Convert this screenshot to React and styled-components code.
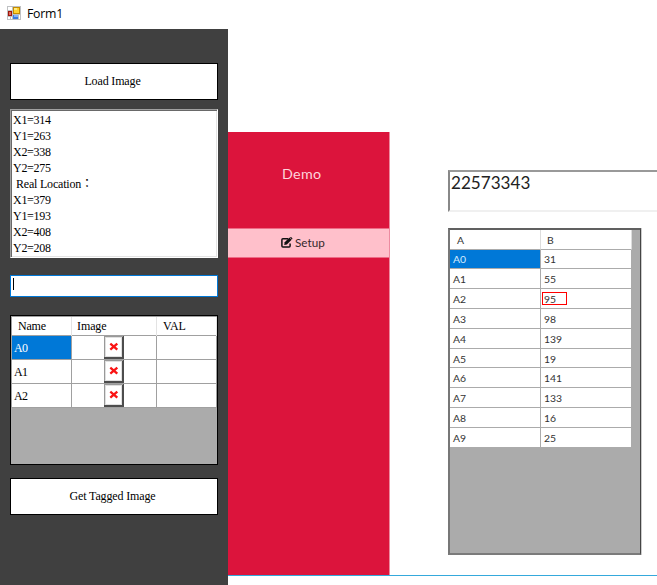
import React from 'react';
import styled, { createGlobalStyle } from 'styled-components';

const GlobalStyle = createGlobalStyle`
  * { box-sizing: border-box; }
  body { margin: 0; background: #fff; overflow: hidden; }
`;

const serif = '"Liberation Serif", "Noto Sans CJK TC", serif';
const geometric = 'Lato, sans-serif';

const Window = styled.div`
  width: 657px;
  height: 585px;
  display: flex;
  flex-direction: column;
  background: #fff;
  color: #000;
  overflow: hidden;
`;

const TitleBar = styled.header`
  height: 29px;
  flex: none;
  display: flex;
  align-items: flex-start;
  gap: 6px;
  padding: 6px 0 0 7px;
  font: 12.3px/16px "Open Sans", sans-serif;
  letter-spacing: -0.25px;
`;

const Body = styled.div`
  flex: 1;
  display: flex;
  min-height: 0;
`;

const Sidebar = styled.aside`
  width: 228px;
  flex: none;
  display: flex;
  flex-direction: column;
  padding: 34px 10px 0;
  background: #404040;
  font: 12px/16px ${serif};
`;

const PushButton = styled.button`
  height: 37px;
  flex: none;
  margin: 0;
  padding: 0 3px 2px 0;
  border: 1px solid #000;
  border-radius: 0;
  background: #fff;
  color: #000;
  font: 12px/16px ${serif};
  letter-spacing: -0.15px;
`;

const ListBox = styled.div`
  height: 149px;
  flex: none;
  margin: 9px 0 17px;
  padding: 1px 0 0 1px;
  border: 1px solid;
  border-color: #a0a0a0 #fff #fff #a0a0a0;
  box-shadow: inset 1px 1px #696969, inset -1px -1px #e3e3e3;
  background: #fff;
`;

const ListItem = styled.div`
  height: 16px;
  line-height: 18px;
  padding-left: ${(p) => (p.$indent ? '4px' : '1px')};
  letter-spacing: ${(p) => (p.$indent ? '-0.2px' : '-0.28px')};
  white-space: pre;
`;

const Field = styled.div`
  height: 22px;
  flex: none;
  margin-bottom: 18px;
  padding: 2px;
  border: 1px solid #0078d7;
  background: #fff;
`;

const Caret = styled.div`
  width: 1px;
  height: 12px;
  background: #000;
`;

const DataGrid = styled.div`
  height: 150px;
  flex: none;
  margin-bottom: 13px;
  border: 1px solid #000;
  background: #ababab;
`;

const GridHeader = styled.div`
  height: 20px;
  display: grid;
  grid-template-columns: 60px 85px 60px;
  border: solid #a0a0a0;
  border-width: 1px 0 1px 1px;
  background: #fff;
`;

const HeaderCell = styled.div`
  padding-left: ${(p) => p.$pad}px;
  border-right: 1px solid #e3e3e3;
  line-height: 19px;
  letter-spacing: ${(p) => p.$spacing || 0};
`;

const GridRow = styled.div`
  height: 24px;
  display: grid;
  grid-template-columns: 60px 85px 60px;
  border-left: 1px solid #a0a0a0;
`;

const GridCell = styled.div`
  display: flex;
  align-items: center;
  justify-content: ${(p) => (p.$image ? 'center' : 'flex-start')};
  padding-left: ${(p) => (p.$image ? 0 : 2)}px;
  border: solid #a0a0a0;
  border-width: 0 1px 1px 0;
  background: ${(p) => (p.$selected ? '#0078d7' : '#fff')};
  color: ${(p) => (p.$selected ? '#fff' : '#000')};
  letter-spacing: -0.7px;
`;

const Preview = styled.main`
  flex: 1;
  display: flex;
  align-items: flex-start;
  min-width: 0;
  height: 547px;
  padding-top: 103px;
  border-bottom: 1px solid #35a9dc;
`;

const RedMenu = styled.nav`
  width: 162px;
  height: 443px;
  flex: none;
  border-right: 1px solid #ed8ba0;
  background: #dc143c;
  font-family: ${geometric};
`;

const Brand = styled.div`
  height: 96px;
  padding: 31px 0 0 54px;
  color: #ffd5dc;
  font-size: 14.3px;
  line-height: 22px;
  letter-spacing: 0.3px;
`;

const MenuItem = styled.div`
  height: 30px;
  display: flex;
  align-items: center;
  gap: 2px;
  padding: 0 0 2px 53px;
  border: solid #ee6b86;
  border-width: 1px 0;
  background: #ffc0cb;
  color: #35272a;
  font-size: 11.7px;
  svg { color: #111; }
`;

const Content = styled.section`
  flex: 1;
  min-width: 0;
  padding: 38px 0 0 58px;
  font-family: ${geometric};
`;

const ValueBox = styled.div`
  height: 42px;
  margin-bottom: 16px;
  padding: 0 0 0 1px;
  border: solid;
  border-width: 2px 0 2px 2px;
  border-color: #999 #fff #f0f0f0 #888;
  color: #222;
  font-size: 17.1px;
  line-height: 22px;
`;

const ValueGrid = styled.div`
  width: 193px;
  height: 327px;
  border: solid;
  border-width: 2px 1px 2px 2px;
  border-color: #606060 #444 #7b7b7b #777;
  box-shadow: 1px 0 #ccc;
  background: #ababab;
  color: #333;
  font-size: 10.4px;
`;

const ValueRow = styled.div`
  height: ${(p) => (p.$header ? 19.5 : 19.84)}px;
  width: 182px;
  display: grid;
  grid-template-columns: 91px 91px;
`;

const ValueCell = styled.div`
  display: flex;
  align-items: center;
  padding: 1px 0 0 ${(p) => p.$pad}px;
  border: solid #ababab;
  border-width: 0 1px 1px 0;
  border-right-color: ${(p) => (p.$header ? '#ddd' : '#ababab')};
  background: ${(p) => (p.$selected ? '#0078d7' : '#fff')};
  color: ${(p) => (p.$selected ? '#d8edff' : '#333')};
`;

const Tagged = styled.span`
  width: 25px;
  height: 13px;
  margin: -2px 0 0 -2px;
  padding-left: 1px;
  border: 1px solid #f00;
  line-height: 13px;
`;

const FormIcon = () => (
  <svg width="14" height="14" viewBox="0 0 14 14" shapeRendering="crispEdges">
    <path d="M0 0h14v14H0z" fill="#bfc1c3" />
    <path d="M1 1h4v3H1zM1 11h2v2H1zM4 11h1v2H4zM12 9h1v4h-1z" fill="#fff" />
    <path d="M6 1h7v7H6z" fill="#c58b00" />
    <path d="M7 2h5v5H7z" fill="#ffd331" />
    <path d="M7 2h3v2H7z" fill="#ffeb83" />
    <path d="M1 5h4v5H1z" fill="#9e160b" />
    <path d="M2 6h2v3H2z" fill="#e36a5a" />
    <path d="M6 9h5v4H6z" fill="#397be0" />
    <path d="M7 9h4v2H7z" fill="#82b3fa" />
  </svg>
);

const MissingImage = () => (
  <svg width="20" height="23" viewBox="0 0 20 23">
    <g shapeRendering="crispEdges">
      <path d="M0 0h20v23H0z" fill="#4d4d4d" />
      <path d="M0 0h19v1H1v20H0z" fill="#999" />
      <path d="M1 1h17v20H1z" fill="#e0e0e0" />
      <path d="M2 2h15v18H2z" fill="#fff" />
    </g>
    <path d="m6.3 7.6 7 6M13.3 7.6l-7 6" stroke="#fa1414" strokeWidth="2.3" />
  </svg>
);

const EditIcon = () => (
  <svg width="12" height="11" viewBox="0 0 12 11" fill="none" stroke="currentColor">
    <path d="M7 1.8H1.9Q.9 1.8.9 2.8v6.1q0 1 1 1h6.2q1 0 1-1V6.5" strokeWidth="1.5" />
    <path d="m3.2 7.9.5-2.7L8.4.5l2.2 2.2-4.7 4.7z" fill="currentColor" stroke="none" />
    <path d="m9 .3.5-.3q.5-.1.9.3l.9.9q.3.4 0 .8l-.5.5z" fill="currentColor" stroke="none" />
  </svg>
);

const locations = [
  'X1=314', 'Y1=263', 'X2=338', 'Y2=275', 'Real Location：',
  'X1=379', 'Y1=193', 'X2=408', 'Y2=208',
];
const values = [31, 55, 95, 98, 139, 19, 141, 133, 16, 25];

export default function App() {
  return (
    <Window>
      <GlobalStyle />
      <TitleBar><FormIcon />Form1</TitleBar>
      <Body>
        <Sidebar>
          <PushButton>Load Image</PushButton>
          <ListBox>
            {locations.map((text) => (
              <ListItem key={text} $indent={text.startsWith('Real')}>{text}</ListItem>
            ))}
          </ListBox>
          <Field><Caret /></Field>
          <DataGrid>
            <GridHeader>
              <HeaderCell $pad={6} $spacing="-0.2px">Name</HeaderCell>
              <HeaderCell $pad={5} $spacing="-0.1px">Image</HeaderCell>
              <HeaderCell $pad={6} $spacing="-0.2px">VAL</HeaderCell>
            </GridHeader>
            {['A0', 'A1', 'A2'].map((name, i) => (
              <GridRow key={name}>
                <GridCell $selected={i === 0}>{name}</GridCell>
                <GridCell $image><MissingImage /></GridCell>
                <GridCell />
              </GridRow>
            ))}
          </DataGrid>
          <PushButton>Get Tagged Image</PushButton>
        </Sidebar>
        <Preview>
          <RedMenu>
            <Brand>Demo</Brand>
            <MenuItem><EditIcon />Setup</MenuItem>
          </RedMenu>
          <Content>
            <ValueBox>22573343</ValueBox>
            <ValueGrid>
              <ValueRow $header>
                <ValueCell $header $pad={7}>A</ValueCell>
                <ValueCell $header $pad={6}>B</ValueCell>
              </ValueRow>
              {values.map((value, i) => (
                <ValueRow key={i}>
                  <ValueCell $pad={3} $selected={i === 0}>{`A${i}`}</ValueCell>
                  <ValueCell $pad={3}>{i === 2 ? <Tagged>{value}</Tagged> : value}</ValueCell>
                </ValueRow>
              ))}
            </ValueGrid>
          </Content>
        </Preview>
      </Body>
    </Window>
  );
}
